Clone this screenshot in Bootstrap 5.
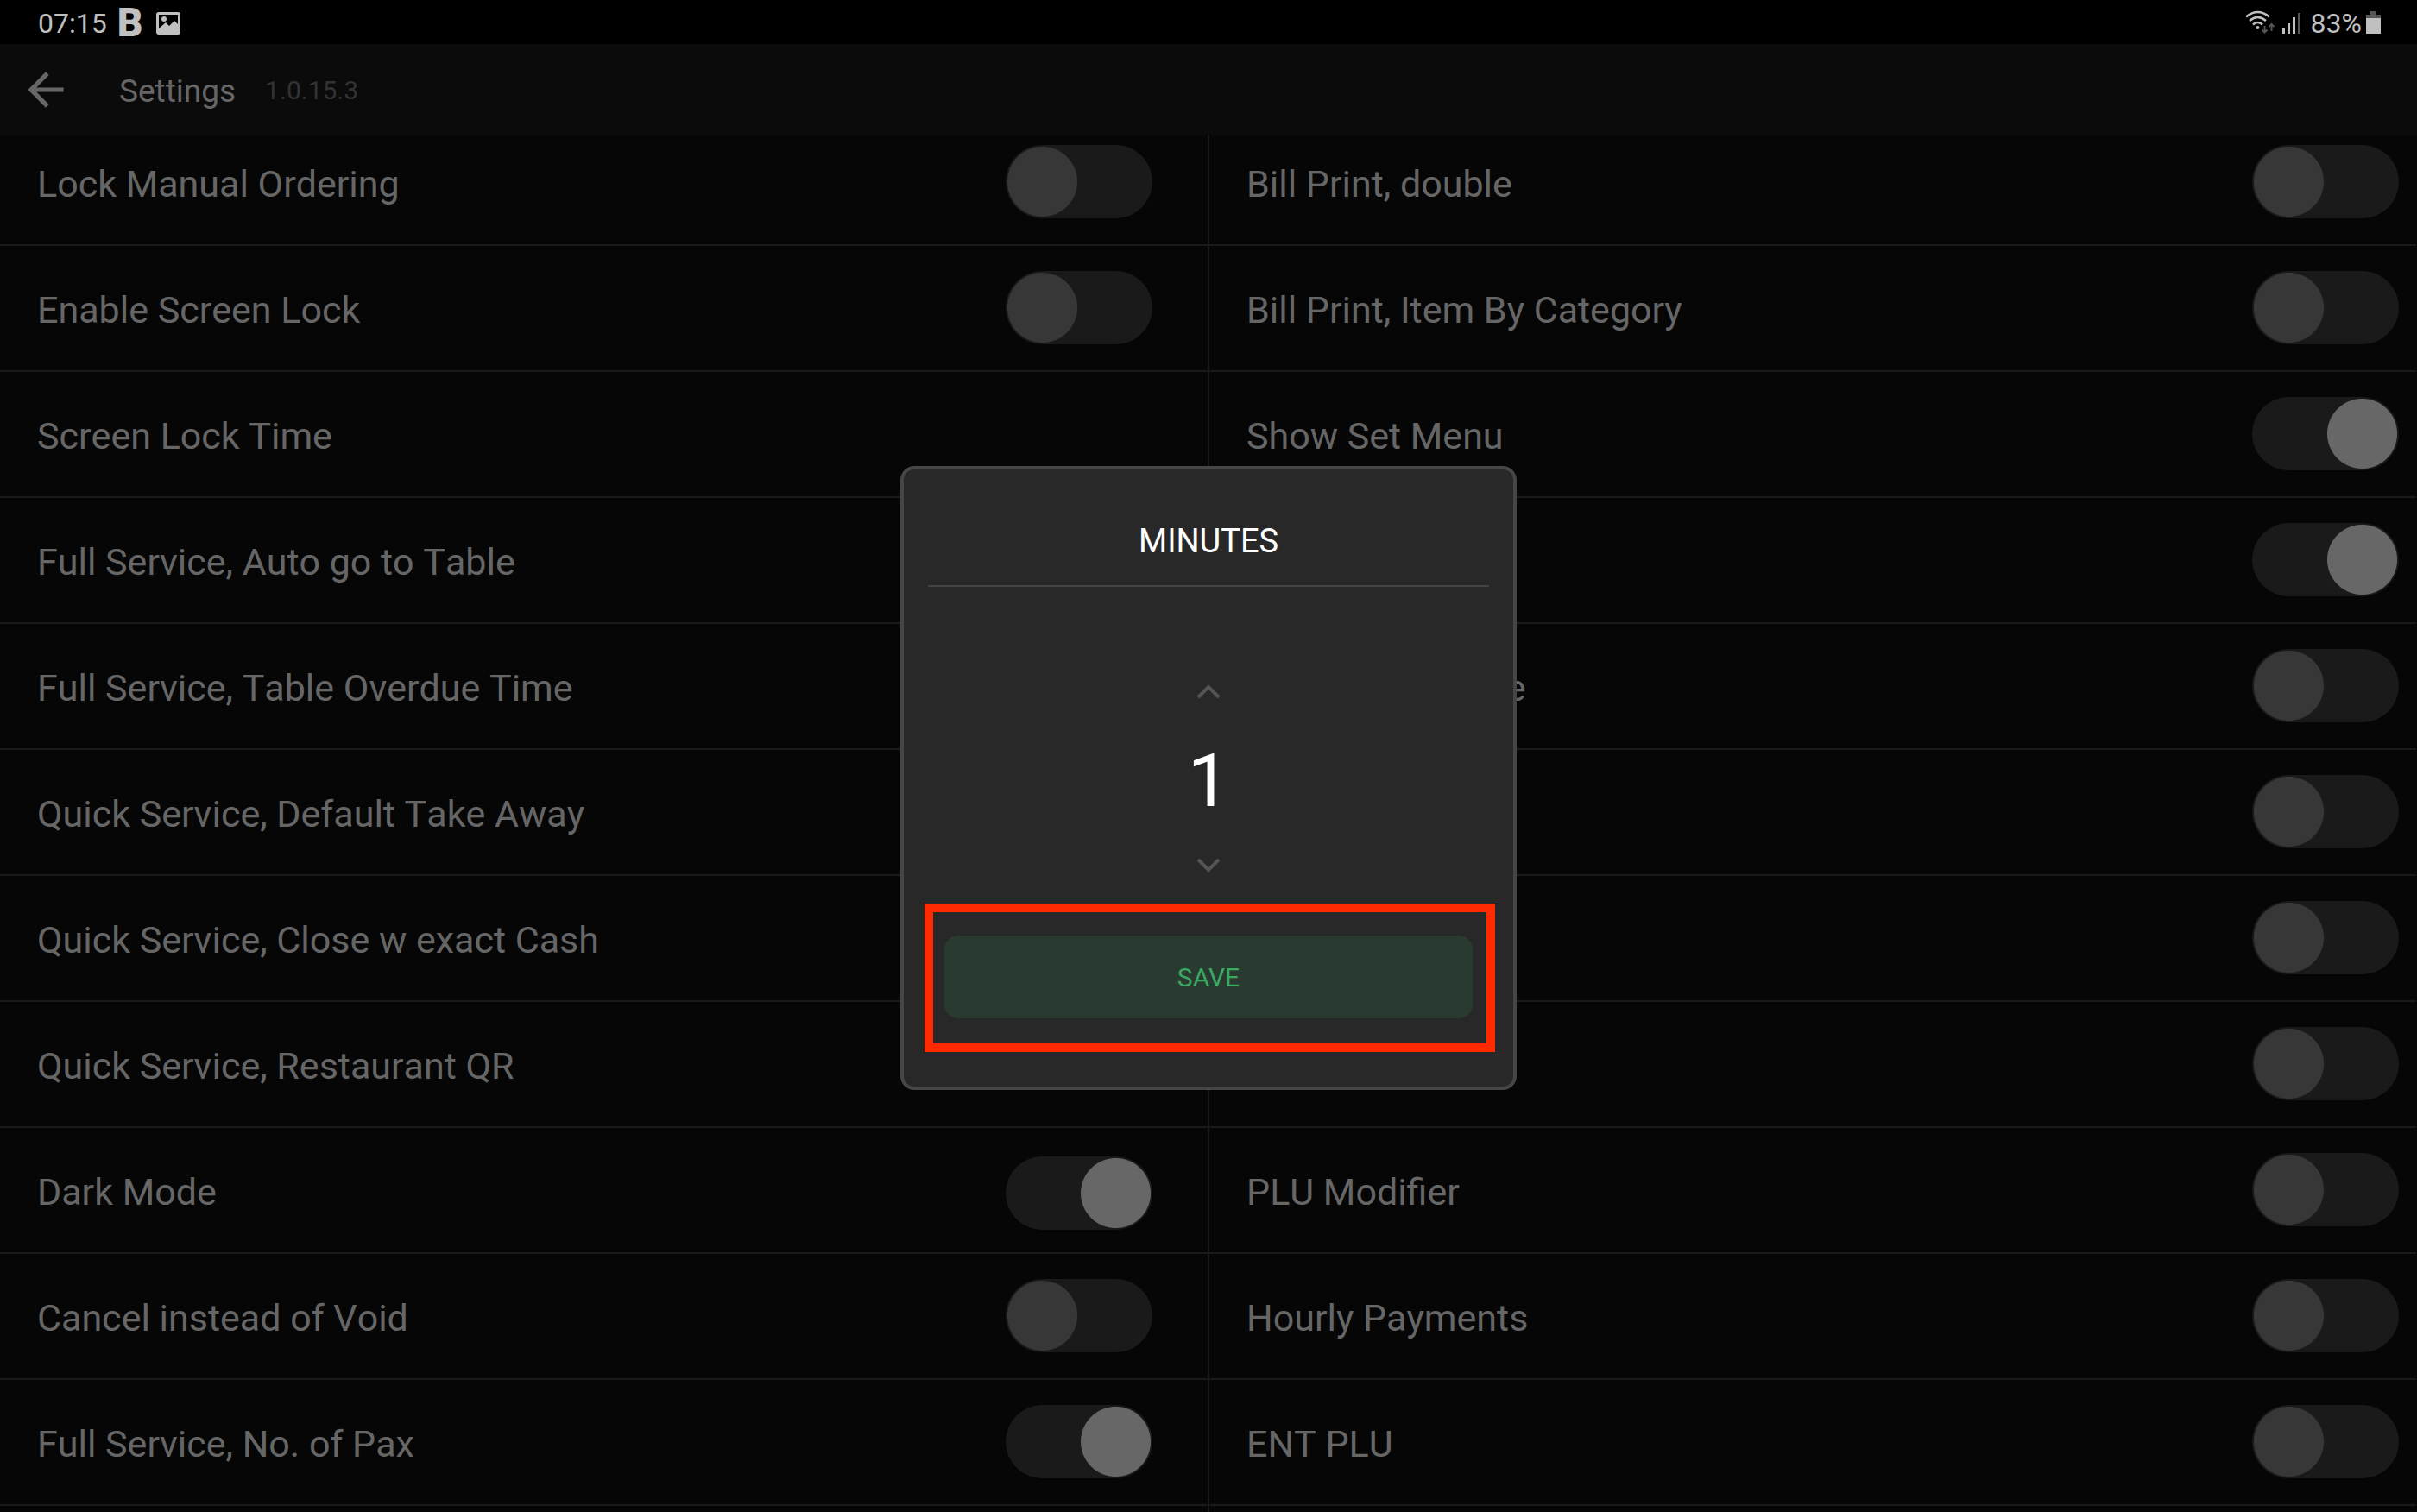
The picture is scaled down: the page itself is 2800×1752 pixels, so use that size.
<!DOCTYPE html>
<html lang="en">
<head>
<meta charset="utf-8">
<meta name="viewport" content="width=device-width, initial-scale=1">
<title>Settings</title>
<link href="https://cdn.jsdelivr.net/npm/bootstrap@5.3.0/dist/css/bootstrap.min.css" rel="stylesheet">
<style>
  body { background: #060606; color: #666; font-family: Roboto, "Noto Sans", sans-serif; font-size: 43px; line-height: 50px; font-kerning: none; }
  .status-bar { height: 51px; background: #000; color: #c0c0c0; font-size: 32px; line-height: 38px; padding: 4px 42px 0 44px; }
  .brand-mark { font-size: 46px; font-weight: 900; line-height: 40px; margin-left: 12px; margin-top: 2px; }
  .status-bar svg { display: block; }
  .app-bar { height: 106px; background: #0b0b0b; padding-left: 22px; z-index: 1; }
  .back-link { color: #666; margin-right: 54px; }
  .app-title { font-size: 37px; line-height: 44px; color: #666; padding-top: 4px; }
  .app-version { font-size: 30px; line-height: 44px; color: #333; margin-left: 34px; padding-top: 2px; }
  .settings-pane { margin-top: -18px; }
  .settings-col { padding: 0; }
  .settings-col + .settings-col { border-left: 2px solid #1a1a1a; margin-left: -1px; }
  .setting { height: 146px; border-bottom: 2px solid #1a1a1a; padding: 0 65px 1px 43px; }
  .settings-col + .settings-col .setting { padding-right: 20px; }
  .toggle.form-check-input { width: 170px; height: 85px; margin: 0; float: none; border: 0; border-radius: 43px; flex: none;
    background-color: #1a1a1a; background-repeat: no-repeat; background-size: 85px 85px; background-position: left center;
    background-image: radial-gradient(circle, #373737 40px, transparent 41px); }
  .toggle.form-check-input:checked { background-color: #1a1a1a; background-position: right center;
    background-image: radial-gradient(circle, #676767 40px, transparent 41px); }
  .overlay { z-index: 2; }
  .dialog-box { width: 714px; background: #282828; border: 4px solid #464646; border-radius: 16px; padding: 64px 28px 79px; color: #fff; }
  .dialog-title { font-size: 38px; line-height: 38px; font-weight: 400; padding-bottom: 32px; border-bottom: 2px solid #434343; margin-bottom: 92px; }
  .step-btn { height: 60px; width: 120px; padding: 0; color: #555; border: 0; line-height: 0; }
  .step-value { height: 140px; width: 300px; padding: 4px 0 0; background: transparent; border: 0; color: #fff; font-size: 86px; text-align: center; }
  .save-area { margin: 52px 19px 0; }
  .save-btn { height: 96px; border: 0; border-radius: 16px; background: #293b30; color: #3ba864; font-size: 30px; line-height: 36px; padding: 2px 0 0; }
  .save-btn:hover { background: #2f4638; color: #3ba864; }
  .highlight-frame { inset: -37px -26px -39px -23px; border: 10px solid #ff2a00; pointer-events: none; }
</style>
<script src="https://cdn.jsdelivr.net/npm/bootstrap@5.3.0/dist/js/bootstrap.bundle.min.js"></script>
</head>
<body class="vh-100 d-flex flex-column overflow-hidden">

<div class="status-bar d-flex align-items-start justify-content-between flex-shrink-0">
  <div class="d-flex align-items-start">
    <span class="pt-1">07:15</span>
    <span class="brand-mark">B</span>
    <svg class="ms-3 mt-2" width="30" height="30" viewBox="0 0 30 30" aria-hidden="true">
      <path fill="#c0c0c0" fill-rule="evenodd" d="M3 2h22a3 3 0 0 1 3 3v20a3 3 0 0 1-3 3H3a3 3 0 0 1-3-3V5a3 3 0 0 1 3-3zm0 3v16l8-7 4 4 6-6 4 4V5z"/>
      <circle cx="9" cy="10" r="3" fill="#c0c0c0"/>
    </svg>
  </div>
  <div class="d-flex align-items-start">
    <svg width="68" height="40" viewBox="0 0 68 40" aria-hidden="true">
      <g fill="none" stroke="#c0c0c0" stroke-width="2.6">
        <path d="M1 15.500Q14.500 4.500 28 15.500M5 20Q14.500 12 24 20M9 24.500Q14.500 19.500 20 24.500"/>
      </g>
      <circle cx="14.500" cy="28" r="2" fill="#c0c0c0"/>
      <path d="M22.500 26v8M19.500 30.500l3 3 3-3M30.500 32v-8M27.500 27l3-3 3 3" fill="none" stroke="#555" stroke-width="2"/>
      <g fill="#c0c0c0"><rect x="43" y="29" width="3" height="6"/><rect x="49" y="23" width="3" height="12"/><rect x="55" y="16" width="3" height="19"/></g>
      <rect x="61" y="11" width="3" height="24" fill="#555"/>
    </svg>
    <span class="pt-1 ms-2">83%</span>
    <svg class="ms-1" width="18" height="40" viewBox="0 0 18 40" aria-hidden="true">
      <path fill="#555" d="M6 9h7v4h5v5H1v-5h5z"/><path fill="#c0c0c0" d="M1 17h17v18H1z"/>
    </svg>
  </div>
</div>

<div class="position-relative flex-grow-1 d-flex flex-column overflow-hidden">
  <header class="app-bar position-relative d-flex align-items-center flex-shrink-0">
    <a class="back-link d-block lh-1" href="#" aria-label="Back">
      <svg class="d-block" width="62" height="62" viewBox="0 0 24 24" aria-hidden="true"><path fill="currentColor" d="M20 11H7.830l5.590-5.590L12 4l-8 8 8 8 1.410-1.410L7.830 13H20v-2z"/></svg>
    </a>
    <h1 class="app-title m-0 fw-normal">Settings</h1>
    <span class="app-version">1.0.15.3</span>
  </header>

  <main class="settings-pane flex-grow-1 row g-0">
    <div class="settings-col col-6">
      <div class="setting d-flex align-items-center justify-content-between"><label class="pt-1" for="l1">Lock Manual Ordering</label><input class="form-check-input toggle" type="checkbox" role="switch" id="l1"></div>
      <div class="setting d-flex align-items-center justify-content-between"><label class="pt-1" for="l2">Enable Screen Lock</label><input class="form-check-input toggle" type="checkbox" role="switch" id="l2"></div>
      <div class="setting d-flex align-items-center"><span class="pt-1">Screen Lock Time</span></div>
      <div class="setting d-flex align-items-center"><span class="pt-1">Full Service, Auto go to Table</span></div>
      <div class="setting d-flex align-items-center"><span class="pt-1">Full Service, Table Overdue Time</span></div>
      <div class="setting d-flex align-items-center"><span class="pt-1">Quick Service, Default Take Away</span></div>
      <div class="setting d-flex align-items-center"><span class="pt-1">Quick Service, Close w exact Cash</span></div>
      <div class="setting d-flex align-items-center"><span class="pt-1">Quick Service, Restaurant QR</span></div>
      <div class="setting d-flex align-items-center justify-content-between"><label class="pt-1" for="l9">Dark Mode</label><input class="form-check-input toggle mt-2" type="checkbox" role="switch" id="l9" checked></div>
      <div class="setting d-flex align-items-center justify-content-between"><label class="pt-1" for="l10">Cancel instead of Void</label><input class="form-check-input toggle" type="checkbox" role="switch" id="l10"></div>
      <div class="setting d-flex align-items-center justify-content-between"><label class="pt-1" for="l11">Full Service, No. of Pax</label><input class="form-check-input toggle" type="checkbox" role="switch" id="l11" checked></div>
    </div>
    <div class="settings-col col-6">
      <div class="setting d-flex align-items-center justify-content-between"><label class="pt-1" for="r1">Bill Print, double</label><input class="form-check-input toggle" type="checkbox" role="switch" id="r1"></div>
      <div class="setting d-flex align-items-center justify-content-between"><label class="pt-1" for="r2">Bill Print, Item By Category</label><input class="form-check-input toggle" type="checkbox" role="switch" id="r2"></div>
      <div class="setting d-flex align-items-center justify-content-between"><label class="pt-1" for="r3">Show Set Menu</label><input class="form-check-input toggle" type="checkbox" role="switch" id="r3" checked></div>
      <div class="setting d-flex align-items-center justify-content-end"><input class="form-check-input toggle" type="checkbox" role="switch" aria-label="Option" checked></div>
      <div class="setting d-flex align-items-center justify-content-between"><label class="pt-1" for="r5">Bill Print, Change</label><input class="form-check-input toggle" type="checkbox" role="switch" id="r5"></div>
      <div class="setting d-flex align-items-center justify-content-end"><input class="form-check-input toggle" type="checkbox" role="switch" aria-label="Option"></div>
      <div class="setting d-flex align-items-center justify-content-end"><input class="form-check-input toggle" type="checkbox" role="switch" aria-label="Option"></div>
      <div class="setting d-flex align-items-center justify-content-end"><input class="form-check-input toggle" type="checkbox" role="switch" aria-label="Option"></div>
      <div class="setting d-flex align-items-center justify-content-between"><label class="pt-1" for="r9">PLU Modifier</label><input class="form-check-input toggle" type="checkbox" role="switch" id="r9"></div>
      <div class="setting d-flex align-items-center justify-content-between"><label class="pt-1" for="r10">Hourly Payments</label><input class="form-check-input toggle" type="checkbox" role="switch" id="r10"></div>
      <div class="setting d-flex align-items-center justify-content-between"><label class="pt-1" for="r11">ENT PLU</label><input class="form-check-input toggle" type="checkbox" role="switch" id="r11"></div>
    </div>
  </main>

  <div class="overlay position-absolute top-0 start-0 w-100 h-100 d-flex align-items-center justify-content-center">
    <div class="dialog-box" role="dialog" aria-labelledby="dialogTitle">
      <h2 class="dialog-title text-center" id="dialogTitle">MINUTES</h2>
      <div class="d-flex flex-column align-items-center">
        <button class="btn step-btn" type="button" aria-label="Increase">
          <svg width="30" height="20" viewBox="0 0 30 20" fill="none" stroke="currentColor" stroke-width="4" aria-hidden="true"><path d="M3 16L15 4l12 12"/></svg>
        </button>
        <input class="step-value" type="text" inputmode="numeric" value="1" aria-labelledby="dialogTitle">
        <button class="btn step-btn" type="button" aria-label="Decrease">
          <svg width="30" height="20" viewBox="0 0 30 20" fill="none" stroke="currentColor" stroke-width="4" aria-hidden="true"><path d="M3 4l12 12L27 4"/></svg>
        </button>
      </div>
      <div class="save-area position-relative">
        <button class="btn save-btn w-100 d-block" type="button">SAVE</button>
        <div class="highlight-frame position-absolute"></div>
      </div>
    </div>
  </div>
</div>
</body>
</html>
